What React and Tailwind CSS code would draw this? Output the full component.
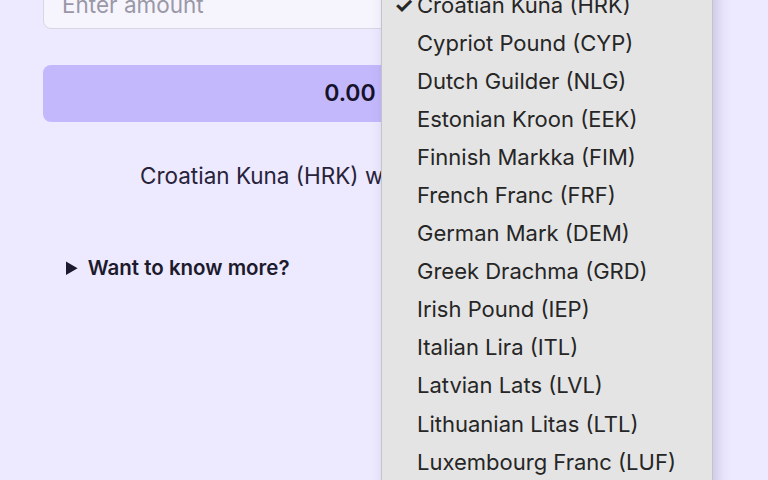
import { useState } from "react";

const currencies = [
  "Croatian Kuna (HRK)",
  "Cypriot Pound (CYP)",
  "Dutch Guilder (NLG)",
  "Estonian Kroon (EEK)",
  "Finnish Markka (FIM)",
  "French Franc (FRF)",
  "German Mark (DEM)",
  "Greek Drachma (GRD)",
  "Irish Pound (IEP)",
  "Italian Lira (ITL)",
  "Latvian Lats (LVL)",
  "Lithuanian Litas (LTL)",
  "Luxembourg Franc (LUF)",
  "Maltese Lira (MTL)",
  "Portuguese Escudo (PTE)",
];

function App() {
  const [amount, setAmount] = useState("");
  const [selected, setSelected] = useState("Croatian Kuna (HRK)");

  return (
    <div className="relative h-[480px] overflow-hidden bg-[#ede9fe] font-['Inter',sans-serif] text-[#1e1b2e]">
      <div className="-mt-[21px] flex flex-col pl-[43px] pr-[57px]">
        <input
          type="text"
          placeholder="Enter amount"
          value={amount}
          onChange={(e) => setAmount(e.target.value)}
          className="h-[50px] w-full rounded-lg border border-[#d8d6e2] bg-[#f6f5fe] px-[18px] text-[22.5px] placeholder:text-[#9a98a6]"
        />

        <button className="mt-[36px] h-[57px] w-full rounded-lg bg-[#c4b8fc] text-[23px] font-semibold text-[#15122a]">
          0.00 HRK
        </button>

        <p className="mt-[39px] pr-[20px] text-center text-[22.5px] leading-[30px] text-[#26233a]">
          Croatian Kuna (HRK) was replaced by Euro
        </p>

        <details className="mt-[62px] pl-[23px]">
          <summary className="cursor-pointer text-[20.5px] font-semibold text-[#1c1a2c]">
            Want to know more?
          </summary>
        </details>
      </div>

      <div className="absolute left-[381px] top-[-20px] w-[332px] border-x border-[#c4c3cc] bg-[#e4e4e4] py-[6px] shadow-[4px_0_12px_rgba(90,80,140,0.25)]">
        {currencies.map((c) => (
          <div
            key={c}
            onClick={() => setSelected(c)}
            className="relative flex h-[38.1px] items-center pl-[35px] text-[22px] text-[#262626]"
          >
            {selected === c && (
              <span className="absolute left-[12px] text-[22px] font-bold">✓</span>
            )}
            {c}
          </div>
        ))}
      </div>
    </div>
  );
}

export default App;
